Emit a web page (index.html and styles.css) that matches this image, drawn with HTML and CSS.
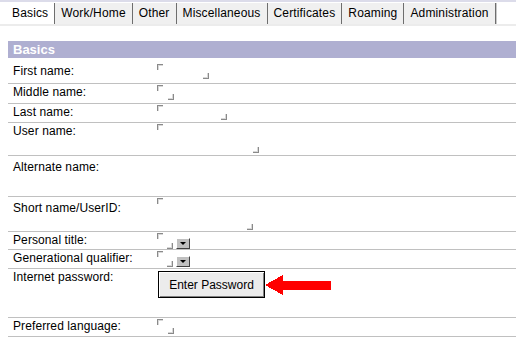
FILE: index.html
```html
<!DOCTYPE html>
<html lang="en">

<head>
  <meta charset="UTF-8">
  <title>Basics</title>
  <link rel="stylesheet" href="styles.css">
</head>

<body>
  <nav class="tabs">
    <div class="tab active">Basics</div>
    <div class="tab">Work/Home</div>
    <div class="tab">Other</div>
    <div class="tab">Miscellaneous</div>
    <div class="tab">Certificates</div>
    <div class="tab">Roaming</div>
    <div class="tab">Administration</div>
  </nav>

  <main class="section">
    <div class="section-title">Basics</div>

    <div class="row row-first">
      <div class="label">First name:</div>
      <div class="field"><span class="ms"></span><span class="me end-first"></span></div>
    </div>
    <div class="row row-19">
      <div class="label">Middle name:</div>
      <div class="field"><span class="ms"></span><span class="me end-middle"></span></div>
    </div>
    <div class="row">
      <div class="label">Last name:</div>
      <div class="field"><span class="ms"></span><span class="me end-last"></span></div>
    </div>
    <div class="row row-32">
      <div class="label">User name:</div>
      <div class="field"><span class="ms"></span><span class="me end-user"></span></div>
    </div>
    <div class="row row-40">
      <div class="label label-low">Alternate name:</div>
      <div class="field"></div>
    </div>
    <div class="row row-34">
      <div class="label label-low">Short name/UserID:</div>
      <div class="field"><span class="ms"></span><span class="me end-short"></span></div>
    </div>
    <div class="row row-17">
      <div class="label">Personal title:</div>
      <div class="field">
        <span class="ms"></span>
        <div class="pick"><span class="me"></span><span class="drop"></span></div>
      </div>
    </div>
    <div class="row">
      <div class="label">Generational qualifier:</div>
      <div class="field">
        <span class="ms"></span>
        <div class="pick"><span class="me"></span><span class="drop"></span></div>
      </div>
    </div>
    <div class="row row-48">
      <div class="label">Internet password:</div>
      <div class="field field-button">
        <button class="btn">Enter Password</button>
        <svg class="arrow" width="66" height="22" viewBox="0 0 66 22" shape-rendering="crispEdges">
          <polygon points="0,11 18,1 18,7 66,7 66,16 18,16 18,21" fill="#ff0000" />
        </svg>
      </div>
    </div>
    <div class="row">
      <div class="label">Preferred language:</div>
      <div class="field"><span class="ms"></span><span class="me end-pref"></span></div>
    </div>
  </main>
</body>

</html>
```

FILE: styles.css
```css
body {
  margin: 0;
  font-family: "Liberation Sans", Arial, sans-serif;
  font-size: 12px;
  color: #000;
  background: #fff;
}

/* tab strip */
.tabs {
  display: flex;
  border-top: 2px solid #dcdcea;
  border-bottom: 2px solid #ececec;
  padding: 1px 0 0 6px;
  height: 21px;
}

.tab {
  padding: 0 6px;
  line-height: 21px;
  letter-spacing: 0.15px;
  background: #f0f0f0;
  border-right: 1px solid #6e6e6e;
  box-shadow: 1px 0 #c8c8c8;
  white-space: nowrap;
}

.tab.active {
  background: #fff;
}

/* section */
.section-title {
  margin: 15px 0 5px 8px;
  height: 17px;
  line-height: 17px;
  padding-left: 5px;
  background: #afafd1;
  color: #fff;
  font-size: 13px;
  font-weight: bold;
}

.row {
  display: grid;
  grid-template-columns: 149px 1fr;
  margin-left: 8px;
  min-height: 18px;
  border-bottom: 1px solid #c0c0c0;
}

.row-first { min-height: 20px; }
.row-19 { min-height: 19px; }
.row-17 { min-height: 17px; }
.row-32 { min-height: 32px; }
.row-34 { min-height: 34px; }
.row-40 { min-height: 40px; }
.row-48 { min-height: 48px; }

.label {
  padding: 1px 0 0 5px;
  line-height: 15px;
  letter-spacing: 0.1px;
  white-space: nowrap;
}

.label-low {
  padding-top: 4px;
}

/* field delimiters */
.field {
  display: flex;
  flex-direction: column;
  align-items: flex-start;
}

.ms,
.me {
  display: block;
  width: 5px;
  height: 5px;
}

.ms {
  margin-top: 1px;
  border-top: 1px solid #8a8a8a;
  border-left: 1px solid #8a8a8a;
  box-shadow: inset 1px 1px #d8d8d8;
}

.me {
  margin-top: 3px;
  margin-left: 10px;
  border-right: 1px solid #8a8a8a;
  border-bottom: 1px solid #8a8a8a;
  box-shadow: inset -1px -1px #d8d8d8;
}

.end-first { margin-left: 46px; }
.end-middle { margin-left: 11px; }
.end-last { margin-left: 64px; }
.end-user { margin-left: 96px; margin-top: 17px; }
.end-short { margin-left: 90px; margin-top: 20px; }
.end-pref { margin-left: 11px; }

.pick {
  display: flex;
  align-items: flex-end;
  margin-top: -1px;
}

.pick .me {
  margin-top: 0;
  margin-left: 10px;
}

.drop {
  position: relative;
  width: 12px;
  height: 9px;
  margin-left: 3px;
  background: #c0c0c0;
  border: 1px solid;
  border-color: #fff #404040 #404040 #fff;
}

.drop::after {
  content: "";
  position: absolute;
  left: 3px;
  top: 3px;
  border-left: 3px solid transparent;
  border-right: 3px solid transparent;
  border-top: 3px solid #000;
}

/* password button */
.field-button {
  flex-direction: row;
  align-items: center;
  padding-top: 2px;
  align-self: start;
}

.btn {
  width: 107px;
  height: 27px;
  margin-left: 1px;
  padding: 0;
  font-family: "Liberation Sans", Arial, sans-serif;
  font-size: 12px;
  color: #000;
  background: #ececec;
  border: 1px solid #000;
  box-shadow: inset 1px 1px #fff, inset -1px -1px #808080;
}

.arrow {
  display: block;
}
```
